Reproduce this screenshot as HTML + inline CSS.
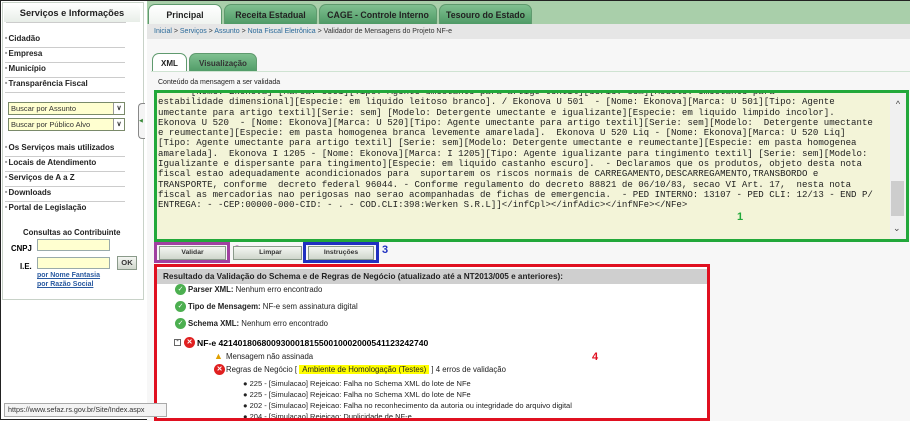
<!DOCTYPE html>
<html><head><meta charset="utf-8"><style>
*{margin:0;padding:0;box-sizing:border-box}
body{width:910px;height:420px;overflow:hidden;background:#fff;font-family:"Liberation Sans",sans-serif;position:relative;border:1px solid #222}
.a{position:absolute}
.side{left:1px;top:1px;width:142px;height:298px;border:1px solid #c8d2c8;background:#fff}
.sh{left:3px;top:3px;width:136px;height:18px;border-radius:6px 6px 0 0;background:linear-gradient(#fff,#e8eee8);font:bold 9.3px "Liberation Sans";text-align:center;line-height:18px;color:#222}
.mi{left:4px;font:bold 8px "Liberation Sans";color:#222;width:120px;border-bottom:1px solid #ccc;padding-bottom:4px;white-space:nowrap}
.mi:before{content:"■ ";font-size:4px;color:#999;vertical-align:2px}
.sel{left:7px;width:117px;height:13px;border:1px solid #7a8a6a;background:#ffffd0;font:7.5px "Liberation Sans";color:#333;padding-left:2px;line-height:11px}
.sel b{position:absolute;right:0;top:0;width:11px;height:11px;border-left:1px solid #999;background:#fff;font-size:7px;text-align:center;line-height:11px}
.tab{top:3px;height:20px;border-radius:7px 7px 0 0;font:bold 8.8px "Liberation Sans";text-align:center;line-height:20px;color:#222;border:1px solid #5f9a6e;border-bottom:none;white-space:nowrap}
.g{background:linear-gradient(#7fc090,#4f9a66)}
.mono{font:9.1px/10.3px "Liberation Mono",monospace;color:#222;white-space:pre}
.btn{height:14px;border:1px solid #8a9a8a;background:linear-gradient(#f4f6f2,#cfd6cc);font:bold 6.8px "Liberation Sans";text-align:center;line-height:12px;color:#333}
.ok{width:11px;height:11px;border-radius:50%;background:#4caf50;color:#fff;font-size:7px;text-align:center;line-height:11px}
.x{width:11px;height:11px;border-radius:50%;background:#e02020;color:#fff;font:bold 7px "Liberation Sans";text-align:center;line-height:11px}
.r{font:7.8px "Liberation Sans";color:#222;white-space:nowrap}
</style></head><body>
<div class="a side"></div>
<div class="a sh">Serviços e Informações</div>
<div class="a" style="left:5px;top:21px;width:120px;height:1px;background:#ccc"></div>
<div class="a mi" style="top:33px">Cidadão</div>
<div class="a mi" style="top:48px">Empresa</div>
<div class="a mi" style="top:63px">Município</div>
<div class="a mi" style="top:78px">Transparência Fiscal</div>
<div class="a sel" style="top:101px">Buscar por Assunto<b>∨</b></div>
<div class="a sel" style="top:117px">Buscar por Público Alvo<b>∨</b></div>
<div class="a mi" style="top:142px">Os Serviços mais utilizados</div>
<div class="a mi" style="top:157px">Locais de Atendimento</div>
<div class="a mi" style="top:172px">Serviços de A a Z</div>
<div class="a mi" style="top:187px">Downloads</div>
<div class="a mi" style="top:202px;border:none">Portal de Legislação</div>
<div class="a" style="left:22px;top:227px;font:bold 7.8px 'Liberation Sans';color:#222">Consultas ao Contribuinte</div>
<div class="a" style="left:10px;top:243px;font:bold 7.8px 'Liberation Sans'">CNPJ</div>
<div class="a" style="left:36px;top:238px;width:73px;height:12px;border:1px solid #9aa;background:#ffffd0"></div>
<div class="a" style="left:19px;top:261px;font:bold 7.8px 'Liberation Sans'">I.E.</div>
<div class="a" style="left:36px;top:256px;width:73px;height:12px;border:1px solid #9aa;background:#ffffd0"></div>
<div class="a btn" style="left:116px;top:255px;width:20px;height:14px;font-size:7.6px">OK</div>
<div class="a" style="left:36px;top:270px;font:bold 7px 'Liberation Sans';color:#2a5aa0;line-height:9px;text-decoration:underline">por Nome Fantasia<br>por Razão Social</div>
<div class="a" style="left:137px;top:102px;width:7px;height:36px;border:1px solid #888;border-right:none;border-radius:4px 0 0 4px;background:#f4f4f4;font-size:5px;line-height:34px;color:#3a8a3a">◀</div>
<div class="a" style="left:146px;top:0;width:763px;height:24px;background:#a9cfaa"></div>
<div class="a tab" style="left:147px;width:74px;background:linear-gradient(#fff,#f0f4f0)">Principal</div>
<div class="a tab g" style="left:223px;width:93px">Receita Estadual</div>
<div class="a tab g" style="left:318px;width:118px">CAGE - Controle Interno</div>
<div class="a tab g" style="left:438px;width:93px">Tesouro do Estado</div>
<div class="a" style="left:146px;top:23px;width:763px;height:15px;background:#e6e6e6;font:7px/15px 'Liberation Sans';color:#333;padding-left:7px"><span style="color:#2a6a9a">Inicial</span> &gt; <span style="color:#2a6a9a">Serviços</span> &gt; <span style="color:#2a6a9a">Assunto</span> &gt; <span style="color:#2a6a9a">Nota Fiscal Eletrônica</span> &gt; Validador de Mensagens do Projeto NF-e</div>
<div class="a" style="left:146px;top:38px;width:763px;height:382px;background:#f7f7f7"></div>
<div class="a tab" style="left:151px;top:52px;width:35px;height:19px;line-height:19px;font-size:8px;background:#fff">XML</div>
<div class="a tab g" style="left:188px;top:52px;width:68px;height:19px;line-height:19px;font-size:8px;color:#333">Visualização</div>
<div class="a" style="left:150px;top:70px;width:759px;height:1px;background:#cfe3d2"></div>
<div class="a" style="left:157px;top:78px;font:7px 'Liberation Sans';color:#222">Conteúdo da mensagem a ser validada</div>
<div class="a" style="left:153px;top:89px;width:755px;height:152px;border:3px solid #22a83a;background:#f3f4d8;overflow:hidden">
<div class="a mono" style="left:1px;top:-6px">      [Nome: Ekonova] [Marca: U501][Tipo: Agente umectante para artigo textil][Serie: sem][Modelo: Umectante para
estabilidade dimensional][Especie: em liquido leitoso branco]. / Ekonova U 501  - [Nome: Ekonova][Marca: U 501][Tipo: Agente
umectante para artigo textil][Serie: sem] [Modelo: Detergente umectante e igualizante][Especie: em liquido limpido incolor].
Ekonova U 520  - [Nome: Ekonova][Marca: U 520][Tipo: Agente umectante para artigo textil][Serie: sem][Modelo:  Detergente umectante
e reumectante][Especie: em pasta homogenea branca levemente amarelada].  Ekonova U 520 Liq - [Nome: Ekonova][Marca: U 520 Liq]
[Tipo: Agente umectante para artigo textil] [Serie: sem][Modelo: Detergente umectante e reumectante][Especie: em pasta homogenea
amarelada].  Ekonova I 1205 - [Nome: Ekonova][Marca: I 1205][Tipo: Agente igualizante para tingimento textil] [Serie: sem][Modelo:
Igualizante e dispersante para tingimento][Especie: em liquido castanho escuro].  - Declaramos que os produtos, objeto desta nota
fiscal estao adequadamente acondicionados para  suportarem os riscos normais de CARREGAMENTO,DESCARREGAMENTO,TRANSBORDO e
TRANSPORTE, conforme  decreto federal 96044. - Conforme regulamento do decreto 88821 de 06/10/83, secao VI Art. 17,  nesta nota
fiscal as mercadorias nao perigosas nao serao acompanhadas de fichas de emergencia.  - PED INTERNO: 13107 - PED CLI: 12/13 - END P/
ENTREGA: - -CEP:00000-000-CID: - . - COD.CLI:398:Werken S.R.L]]&lt;/infCpl&gt;&lt;/infAdic&gt;&lt;/infNFe&gt;&lt;/NFe&gt;</div>
<div class="a" style="left:733px;top:0;width:16px;height:146px;background:#f0f0f0;font-size:9px;color:#444;text-align:center"><div style="margin-top:6px">^</div><div class="a" style="left:1px;top:88px;width:13px;height:35px;background:#cdcdcd"></div><div class="a" style="left:3px;top:130px">⌄</div></div>
<div class="a" style="left:580px;top:118px;font:bold 11px 'Liberation Sans';color:#22a83a">1</div>
</div>
<div class="a" style="left:153px;top:241px;width:76px;height:21px;border:3px solid #a040a0"></div>
<div class="a btn" style="left:158px;top:245px;width:67px">Validar</div>
<div class="a" style="left:233px;top:243px;font:bold 11px 'Liberation Sans';color:#a040a0">2</div>
<div class="a btn" style="left:232px;top:245px;width:69px;padding-left:6px">Limpar</div>
<div class="a" style="left:302px;top:241px;width:76px;height:21px;border:3px solid #2030c0"></div>
<div class="a btn" style="left:307px;top:245px;width:66px">Instruções</div>
<div class="a" style="left:381px;top:243px;font:bold 11px 'Liberation Sans';color:#2030c0">3</div>
<div class="a" style="left:153px;top:263px;width:556px;height:157px;border:3px solid #e01020;background:#fff;overflow:hidden">
<div class="a" style="left:0;top:2px;width:550px;height:15px;background:#cfcfcf;font:bold 8.2px/15px 'Liberation Sans';color:#222;padding-left:6px;white-space:nowrap">Resultado da Validação do Schema e de Regras de Negócio (atualizado até a NT2013/005 e anteriores):</div>
<div class="a ok" style="left:18px;top:17px">✓</div><div class="a r" style="left:31px;top:18px"><b>Parser XML:</b> Nenhum erro encontrado</div>
<div class="a ok" style="left:18px;top:34px">✓</div><div class="a r" style="left:31px;top:35px"><b>Tipo de Mensagem:</b> NF-e sem assinatura digital</div>
<div class="a ok" style="left:18px;top:51px">✓</div><div class="a r" style="left:31px;top:52px"><b>Schema XML:</b> Nenhum erro encontrado</div>
<div class="a" style="left:17px;top:72px;width:7px;height:7px;border:1px solid #666;font-size:7px;line-height:4px;text-align:center">-</div>
<div class="a x" style="left:27px;top:70px">✕</div><div class="a" style="left:40px;top:71px;font:bold 8.6px 'Liberation Sans';white-space:nowrap">NF-e 42140180680093000181550010002000541123242740</div>
<div class="a" style="left:57px;top:84px;color:#e0a000;font-size:9px">▲</div><div class="a r" style="left:69px;top:85px">Mensagem não assinada</div>
<div class="a x" style="left:57px;top:97px">✕</div><div class="a r" style="left:69px;top:98px">Regras de Negócio [ <span style="background:#ff0;padding:0 3px">Ambiente de Homologação (Testes)</span> ] 4 erros de validação</div>
<div class="a r" style="left:86px;top:111px;font-size:7.5px;line-height:11px">● 225 - [Simulacao] Rejeicao: Falha no Schema XML do lote de NFe<br>● 225 - [Simulacao] Rejeicao: Falha no Schema XML do lote de NFe<br>● 202 - [Simulacao] Rejeicao: Falha no reconhecimento da autoria ou integridade do arquivo digital<br>● 204 - [Simulacao] Rejeicao: Duplicidade de NF-e</div>
<div class="a" style="left:435px;top:84px;font:bold 11px 'Liberation Sans';color:#e01020">4</div>
</div>
<div class="a" style="left:3px;top:402px;width:163px;height:14px;border:1px solid #aaa;background:#f4f4f4;font:7.2px/12px 'Liberation Sans';color:#333;padding-left:3px;white-space:nowrap">https://www.sefaz.rs.gov.br/Site/Index.aspx</div>
</body></html>
